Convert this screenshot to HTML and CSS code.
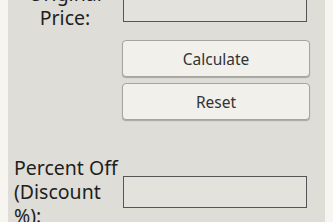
FILE: index.html
```html
<!DOCTYPE html>
<html lang="en">
<head>
    <meta charset="UTF-8">
    <meta name="viewport" content="width=device-width, initial-scale=1.0">
    <title>Discount Calculator</title>
    <link rel="stylesheet" href="styles.css">
</head>
<body>
    <div class="panel">
        <div class="row">
            <label class="field-label" for="price">Original Price:</label>
            <input class="field-input" type="text" id="price">
        </div>

        <div class="actions">
            <button class="btn">Calculate</button>
            <button class="btn">Reset</button>
        </div>

        <div class="row row-result">
            <label class="field-label" for="discount">Percent Off (Discount %):</label>
            <input class="field-input" type="text" id="discount">
        </div>
    </div>
</body>
</html>
```

FILE: styles.css
```css
* {
    margin: 0;
    padding: 0;
    box-sizing: border-box;
}

body {
    font-family: 'Noto Sans', 'Open Sans', sans-serif;
    background: #f7f5ef;
    margin: 0 8px;
    overflow: hidden;
}

.panel {
    background: #dfddd7;
    margin-top: -18px;
    padding: 0 18px 20px 6px;
}

.row {
    display: grid;
    grid-template-columns: 102px 1fr;
    column-gap: 6px;
    align-items: center;
}

.field-label {
    font-size: 19.5px;
    line-height: 24px;
    color: #1e1e1e;
    text-align: center;
}

.row-result .field-label {
    text-align: left;
    margin-right: -6px;
}

.field-input {
    height: 32px;
    margin-left: 1px;
    background: #e4e2dc;
    border: 1px solid #555;
    outline: none;
}

.actions {
    display: flex;
    flex-direction: column;
    gap: 6px;
    margin: 10px -3px 36px 108px;
}

.btn {
    height: 37px;
    font-family: 'Noto Sans', 'Open Sans', sans-serif;
    font-size: 15.5px;
    color: #333;
    background: #f2f0eb;
    border: 1px solid #a7a59f;
    border-radius: 4px;
    box-shadow: 0 1px 1px rgba(0, 0, 0, 0.25);
}
```
